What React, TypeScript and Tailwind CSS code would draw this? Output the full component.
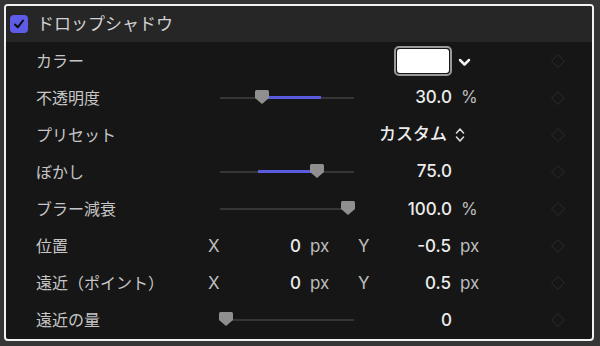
import React from "react";

const FONT = { fontFamily: "Inter, 'Noto Sans CJK JP', sans-serif" };

function Diamond() {
  return (
    <div className="ml-auto mr-[26px] flex h-[16px] w-[16px] items-center justify-center">
      <div className="h-[10px] w-[10px] rotate-45 border-[1.5px] border-[#272727]" />
    </div>
  );
}

function Thumb() {
  return (
    <svg width="14" height="14" viewBox="0 0 14 14" className="block">
      <path d="M1.5 0 H12.5 Q14 0 14 1.5 V8 L7 14 L0 8 V1.5 Q0 0 1.5 0 Z" fill="#8f8f8f" />
    </svg>
  );
}

function Slider({ thumb, blueFrom, blueTo }: { thumb: number; blueFrom?: number; blueTo?: number }) {
  return (
    <div className="relative h-[14px] w-[134px]">
      <div className="absolute left-0 right-0 top-[6px] h-[2px] bg-[#363636]" />
      {blueFrom !== undefined && blueTo !== undefined && (
        <div
          className="absolute top-[5.5px] h-[3px] bg-[#5b5be0]"
          style={{ left: blueFrom, width: blueTo - blueFrom }}
        />
      )}
      <div className="absolute top-[-1px]" style={{ left: thumb - 7 }}>
        <Thumb />
      </div>
    </div>
  );
}

function Label({ children, w = "w-[184px]" }: { children: React.ReactNode; w?: string }) {
  return <div className={`${w} shrink-0 text-[16px] leading-none text-[#c6c6c6]`}>{children}</div>;
}

function Value({ children, w = "w-[98px]" }: { children: React.ReactNode; w?: string }) {
  return (
    <div className={`${w} shrink-0 text-right text-[17px] font-medium leading-none text-[#ececec]`}>{children}</div>
  );
}

function Unit({ children }: { children: React.ReactNode }) {
  return <div className="ml-[9px] w-[40px] shrink-0 text-[17px] leading-none text-[#bdbdbd]">{children}</div>;
}

function Row({ children }: { children: React.ReactNode }) {
  return <div className="flex h-[37.125px] items-center pl-[30px]">{children}</div>;
}

export default function App() {
  return (
    <div className="h-[346px] w-[600px] bg-[#353535] pl-[4px] pr-[6px] pt-[4px] pb-[5px]" style={FONT}>
      <div className="flex h-full flex-col overflow-hidden rounded-[4px] border-2 border-[#f2f2f2] bg-[#161616]">
        <div className="flex h-[36px] shrink-0 items-center bg-[#262626] pl-[4px]">
          <div className="flex h-[18px] w-[18px] items-center justify-center rounded-[4px] bg-[#5e5ce6]">
            <svg width="12" height="12" viewBox="0 0 12 12">
              <path d="M2 6.5 L4.8 9.3 L10 2.5" stroke="#0b0b0b" strokeWidth="2" fill="none" strokeLinecap="round" strokeLinejoin="round" />
            </svg>
          </div>
          <div className="ml-[9px] text-[17px] leading-none text-[#d2d2d2]">ドロップシャドウ</div>
        </div>
        <div className="flex flex-col">
          <Row>
            <Label w="w-[358px]">カラー</Label>
            <div className="flex h-[30px] w-[58px] items-center justify-center rounded-[5px] border-2 border-[#9a9a9a] p-[1px]">
              <div className="h-full w-full rounded-[3px] bg-white" />
            </div>
            <svg width="13" height="9" viewBox="0 0 13 9" className="ml-[6px] mt-[3px]">
              <path d="M2 2 L6.5 6.5 L11 2" stroke="#f0f0f0" strokeWidth="2.5" fill="none" strokeLinecap="round" strokeLinejoin="round" />
            </svg>
            <Diamond />
          </Row>
          <Row>
            <Label>不透明度</Label>
            <Slider thumb={42} blueFrom={48} blueTo={101} />
            <Value>30.0</Value>
            <Unit>%</Unit>
            <Diamond />
          </Row>
          <Row>
            <Label w="w-[343px]">プリセット</Label>
            <div className="text-[17px] font-medium leading-none text-[#ececec]">カスタム</div>
            <svg width="10" height="18" viewBox="0 0 10 18" className="ml-[8px]">
              <path d="M1.5 7 L5 3 L8.5 7 M1.5 11 L5 15 L8.5 11" stroke="#d8d8d8" strokeWidth="1.6" fill="none" strokeLinecap="round" strokeLinejoin="round" />
            </svg>
            <Diamond />
          </Row>
          <Row>
            <Label>ぼかし</Label>
            <Slider thumb={97} blueFrom={38} blueTo={92} />
            <Value>75.0</Value>
            <Unit>{""}</Unit>
            <Diamond />
          </Row>
          <Row>
            <Label>ブラー減衰</Label>
            <Slider thumb={128} />
            <Value>100.0</Value>
            <Unit>%</Unit>
            <Diamond />
          </Row>
          <Row>
            <Label w="w-[172px]">位置</Label>
            <div className="w-[12px] shrink-0 text-[17px] leading-none text-[#bdbdbd]">X</div>
            <Value w="w-[81px]">0</Value>
            <div className="ml-[9px] w-[48px] shrink-0 text-[17px] leading-none text-[#bdbdbd]">px</div>
            <div className="w-[12px] shrink-0 text-[17px] leading-none text-[#bdbdbd]">Y</div>
            <Value w="w-[81px]">-0.5</Value>
            <Unit>px</Unit>
            <Diamond />
          </Row>
          <Row>
            <Label w="w-[172px]">遠近（ポイント）</Label>
            <div className="w-[12px] shrink-0 text-[17px] leading-none text-[#bdbdbd]">X</div>
            <Value w="w-[81px]">0</Value>
            <div className="ml-[9px] w-[48px] shrink-0 text-[17px] leading-none text-[#bdbdbd]">px</div>
            <div className="w-[12px] shrink-0 text-[17px] leading-none text-[#bdbdbd]">Y</div>
            <Value w="w-[81px]">0.5</Value>
            <Unit>px</Unit>
            <Diamond />
          </Row>
          <Row>
            <Label>遠近の量</Label>
            <Slider thumb={6} />
            <Value>0</Value>
            <Unit>{""}</Unit>
            <Diamond />
          </Row>
        </div>
      </div>
    </div>
  );
}
